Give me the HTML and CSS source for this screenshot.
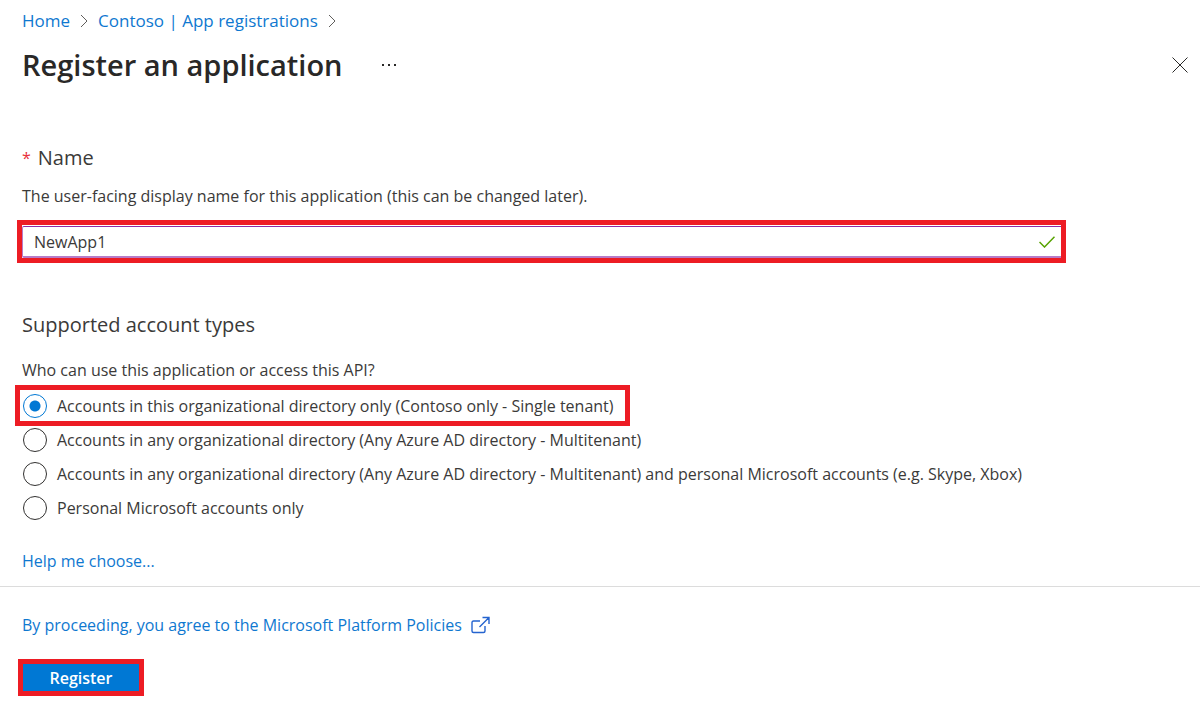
FILE: index.html
```html
<!DOCTYPE html>
<html lang="en">
<head>
<meta charset="utf-8">
<title>Register an application</title>
<link rel="stylesheet" href="styles.css">
</head>
<body>
<header class="page-header">
  <nav class="breadcrumb" aria-label="Breadcrumb">
    <a href="#">Home</a>
    <svg class="chevron" viewBox="0 0 8 14" aria-hidden="true"><path d="M1 1l6 6-6 6"/></svg>
    <a href="#">Contoso | App registrations</a>
    <svg class="chevron" viewBox="0 0 8 14" aria-hidden="true"><path d="M1 1l6 6-6 6"/></svg>
  </nav>
  <div class="title-row">
    <h1>Register an application</h1>
    <button class="icon-button" type="button" aria-label="More">
      <svg class="dots" viewBox="0 0 16 4"><path d="M1 1h2v2H1zM7 1h2v2H7zM13 1h2v2h-2z"/></svg>
    </button>
    <button class="icon-button close" type="button" aria-label="Close">
      <svg class="cross" viewBox="0 0 16 16"><path d="M.5.5l15 15M15.5.5l-15 15"/></svg>
    </button>
  </div>
</header>
<form>
  <main class="content">
    <section class="name-section">
      <h2 class="name-heading"><span class="required">*</span><label for="name">Name</label></h2>
      <p class="hint">The user-facing display name for this application (this can be changed later).</p>
      <div class="highlight field">
        <input class="text-input" id="name" type="text" value="NewApp1">
        <svg class="check" viewBox="0 0 16 12" aria-hidden="true"><path d="M.5 6l5 5L15.500.8"/></svg>
      </div>
    </section>
    <fieldset class="accounts">
      <legend>Supported account types</legend>
      <p class="question">Who can use this application or access this API?</p>
      <label class="option highlight"><input type="radio" name="type" checked><span>Accounts in this organizational directory only (Contoso only - Single tenant)</span></label>
      <label class="option"><input type="radio" name="type"><span>Accounts in any organizational directory (Any Azure AD directory - Multitenant)</span></label>
      <label class="option"><input type="radio" name="type"><span>Accounts in any organizational directory (Any Azure AD directory - Multitenant) and personal Microsoft accounts (e.g. Skype, Xbox)</span></label>
      <label class="option"><input type="radio" name="type"><span>Personal Microsoft accounts only</span></label>
    </fieldset>
    <a class="help" href="#">Help me choose...</a>
  </main>
  <footer class="footer">
    <a class="policies" href="#"><span>By proceeding, you agree to the Microsoft Platform Policies</span>
      <svg class="external" viewBox="0 0 19 18" aria-hidden="true"><path d="M9 5H2.500Q1 5 1 6.500v8.500Q1 16.500 2.500 16.500h10Q14 16.500 14 15v-5M11.500 1.500H18V8M18 1.500L8.500 11"/></svg></a>
    <button class="register highlight" type="submit">Register</button>
  </footer>
</form>
</body>
</html>
```
FILE: styles.css
```css
* { box-sizing: border-box; }
body { margin: 0; background: #fff; color: #3b3a39; font: 16px/24px "Open Sans", "Noto Sans", sans-serif; }
h1, h2, p { margin: 0; }
a { color: #0f78d0; text-decoration: none; }
svg { display: block; fill: none; stroke: currentColor; }
.page-header { padding: 8px 12px 0 22px; }
.breadcrumb { display: flex; align-items: center; gap: 10px; font-size: 17px; line-height: 26px; }
.chevron { width: 8px; height: 14px; stroke: #605e5c; }
.title-row { display: flex; align-items: center; padding-top: 10px; }
h1 { font-size: 29px; line-height: 42px; font-weight: 600; color: #292827; }
.icon-button { padding: 0; border: 0; background: none; color: #292827; }
.title-row .icon-button { margin-left: 38px; }
.title-row .close { margin-left: auto; }
.dots { width: 16px; height: 4px; fill: currentColor; stroke: none; }
.cross { width: 16px; height: 16px; }
.content { padding: 58px 22px 13px; border-bottom: 1px solid #dcdcdc; }
h2, legend { font-size: 20px; line-height: 28px; font-weight: 400; }
.name-heading { display: flex; gap: 7px; }
.required { color: #e8303a; font-size: 16px; }
.hint { padding: 12px 0; }
.highlight { border: 5px solid #ed1c24; }
.field { position: relative; max-width: 1049px; margin-left: -5px; padding-top: 1px; }
.text-input { display: block; width: 100%; height: 32px; padding: 0 40px 0 11px; border: solid #b67cc8; border-width: 1px 0 2px 1px; border-top-color: #8a2da5; border-radius: 2px 0 0 2px; font: inherit; color: inherit; outline: 0; }
.check { position: absolute; right: 6px; top: 11px; width: 16px; height: 12px; stroke: #57a300; stroke-width: 1.5; }
.accounts { margin: 0; padding: 48px 0 0; border: 0; }
legend { padding: 0; float: left; width: 100%; }
.question { clear: both; padding: 19px 0 3px; }
.option { display: flex; align-items: center; gap: 10px; width: fit-content; min-height: 34px; margin-left: 1px; }
.option.highlight { min-height: 41px; margin: 0 0 -3px -7px; padding: 0 11px 0 3px; }
.option input { appearance: none; flex: none; width: 24px; height: 24px; margin: 0; border: 1px solid #323130; border-radius: 50%; }
.option input:checked { border-color: #0078d4; background: radial-gradient(circle, #0078d4 5px, transparent 6px); }
.help { display: inline-block; margin-top: 24px; }
.footer { display: flex; flex-direction: column; align-items: flex-start; gap: 22px; padding: 26px 22px 12px; }
.policies { display: flex; align-items: center; gap: 9px; }
.external { width: 19px; height: 18px; stroke: #2564cf; stroke-width: 1.4; }
.register { width: 126px; height: 37px; margin-left: -4px; padding: 0; background: #0078d4; color: #fff; font: 600 16px/24px "Open Sans", "Noto Sans", sans-serif; }
```
